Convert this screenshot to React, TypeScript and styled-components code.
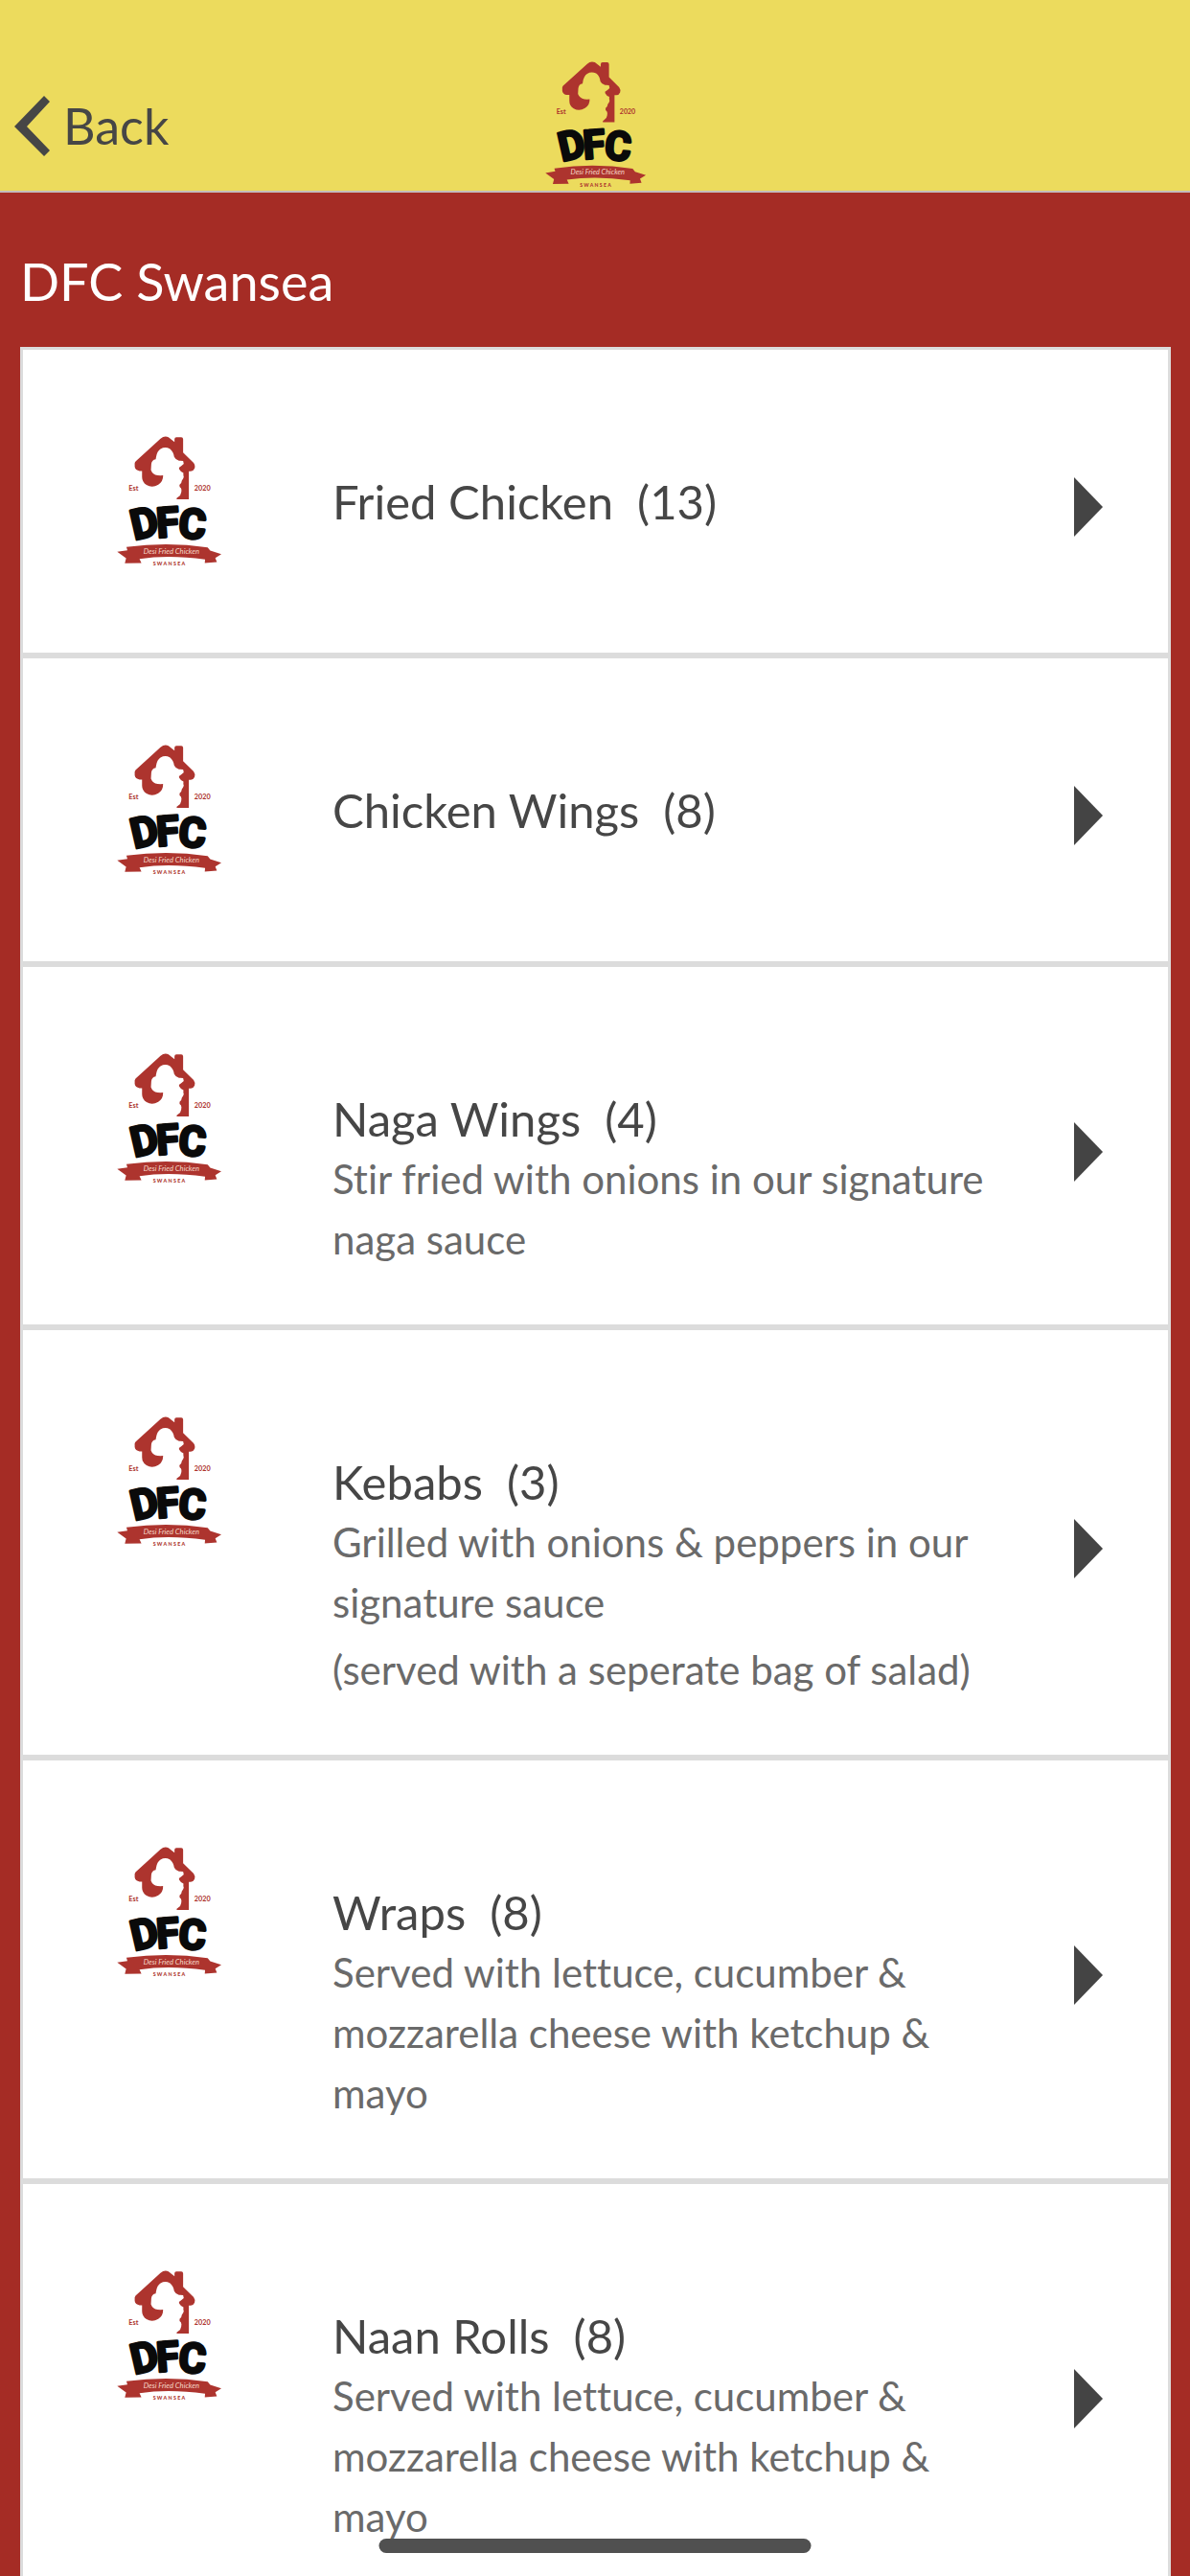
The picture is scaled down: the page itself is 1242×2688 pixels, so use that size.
import React from "react";
import styled, { createGlobalStyle } from "styled-components";

const GlobalStyle = createGlobalStyle`
  *, *::before, *::after { box-sizing: border-box; }
  body {
    margin: 0;
    background: #a52c25;
    font-family: Lato, "Open Sans", sans-serif;
    font-variant-ligatures: none;
    color: #464646;
  }
`;

const Screen = styled.div`
  display: flex;
  flex-direction: column;
  height: 100vh;
  overflow: hidden;
`;

const TopBar = styled.header`
  flex: none;
  display: grid;
  grid-template-columns: 1fr auto 1fr;
  align-items: center;
  padding: 62px 15px 2px;
  background: #ecdb5d;
  border-bottom: 2px solid #c4bcbc;
`;

const BackButton = styled.button`
  justify-self: start;
  display: flex;
  align-items: center;
  gap: 14px;
  padding: 3px 0 0;
  border: 0;
  background: none;
  color: inherit;
  font: inherit;
  font-size: 52px;
  line-height: 66px;
  cursor: pointer;
`;

const Content = styled.main`
  flex: 1;
  min-height: 0;
  padding: 0 20px 0 21px;
  overflow-y: auto;
  scrollbar-width: none;
`;

const PageTitle = styled.h1`
  margin: 0;
  padding: 59px 0 34px;
  color: #fff;
  font-size: 54px;
  font-weight: 400;
  line-height: 68px;
`;

const CategoryList = styled.ul`
  margin: 0;
  padding: 0;
  list-style: none;
`;

const CategoryLink = styled.a`
  display: flex;
  align-items: flex-start;
  min-height: 322px;
  padding: 0 68px 0 96px;
  border: 3px solid #dcdcdc;
  background: #fff;
  color: inherit;
  text-decoration: none;
`;

const Thumb = styled.span`
  flex: none;
  width: 227px;
  padding-top: 88px;
`;

const Details = styled.div`
  flex: 1;
  padding: 126px 60px 57px 0;
`;

const CategoryName = styled.h2`
  margin: 0;
  font-size: 49px;
  font-weight: 400;
  line-height: 64px;
  white-space: pre-wrap;
`;

const Description = styled.p`
  margin: 0;
  color: #6a6a6a;
  font-size: 42px;
  line-height: 63px;

  & + & {
    margin-top: 7px;
  }
`;

const ArrowCell = styled.span`
  flex: none;
  align-self: center;
  padding-top: 12px;
`;

const Drawing = styled.svg`
  display: block;
`;

const HomeIndicator = styled.div`
  position: fixed;
  bottom: 24px;
  left: 50%;
  width: 451px;
  height: 15px;
  border-radius: 8px;
  background: #505050;
  transform: translateX(-50%);
`;

function Logo({ width, height }: { width: number; height: number }) {
  return (
    <Drawing width={width} height={height} viewBox="60 70 340 420" role="img" aria-label="DFC logo">
      <g fill="#ad342e">
        <path d="M122 165 C121 160 124 155 128 152 L203 84 Q215 73 228 79 L247 94 V85 Q247 79 253 79 H268 Q274 79 274 85 V127 L307 160 Q313 168 310 177 Q307 185 298 186 H292 V274 H254 Q252 270 258 267 Q267 262 268 252 Q270 244 267 239 Q261 235 263 228 Q270 222 270 215 Q275 209 276 204 Q274 197 275 191 Q266 188 262 180 L261 175 L269 169 L276 163 L274 154 Q267 152 261 153 Q250 150 246 141 Q244 124 232 115 Q217 108 203 116 Q192 123 189 142 L188 148 Q175 150 174 164 L173 182 Q178 196 194 199 Q203 200 211 199 Q212 218 196 228 Q177 239 159 229 Q145 220 145 204 V185 H137 Q124 183 122 172 Z" />
        <path d="M67 439 L99 434 L96 424 Q224 406 351 425 L359 435 L394 446 L375 458 L380 471 L342 474 L343 463 Q230 447 137 461 L143 474 L91 475 L95 459 Z" />
        <text x="103" y="247" fontSize="22" fontWeight="700" fontFamily="Lato, sans-serif">Est</text>
        <text x="309" y="247" fontSize="22" fontWeight="700" fontFamily="Lato, sans-serif">2020</text>
        <text x="232" y="483" fontSize="16" fontWeight="900" fontFamily="Lato, sans-serif" letterSpacing="4" textAnchor="middle">SWANSEA</text>
      </g>
      <text
        x="121 193 257"
        y="402 394 393"
        rotate="-13 -4 5"
        fill="#0a0a0a"
        stroke="#0a0a0a"
        strokeWidth="9"
        strokeLinejoin="round"
        fontSize="130"
        fontWeight="700"
        fontFamily="Roboto, sans-serif"
      >
        DFC
      </text>
      <text x="237" y="444" fill="#f7d9c9" fontSize="23" fontStyle="italic" fontFamily="Lato, sans-serif" textAnchor="middle">
        Desi Fried Chicken
      </text>
    </Drawing>
  );
}

type Category = { name: string; count: number; lines?: string[] };

const categories: Category[] = [
  { name: "Fried Chicken", count: 13 },
  { name: "Chicken Wings", count: 8 },
  { name: "Naga Wings", count: 4, lines: ["Stir fried with onions in our signature naga sauce"] },
  {
    name: "Kebabs",
    count: 3,
    lines: ["Grilled with onions & peppers in our signature sauce", "(served with a seperate bag of salad)"],
  },
  { name: "Wraps", count: 8, lines: ["Served with lettuce, cucumber & mozzarella cheese with ketchup & mayo"] },
  { name: "Naan Rolls", count: 8, lines: ["Served with lettuce, cucumber & mozzarella cheese with ketchup & mayo"] },
];

function CategoryRow({ name, count, lines = [] }: Category) {
  return (
    <li>
      <CategoryLink href="#">
        <Thumb>
          <Logo width={113} height={140} />
        </Thumb>
        <Details>
          <CategoryName>{`${name}  (${count})`}</CategoryName>
          {lines.map((line) => (
            <Description key={line}>{line}</Description>
          ))}
        </Details>
        <ArrowCell>
          <Drawing width="30" height="62" viewBox="0 0 30 62" aria-hidden="true">
            <path d="M0 0 L30 31 L0 62 Z" fill="#444" />
          </Drawing>
        </ArrowCell>
      </CategoryLink>
    </li>
  );
}

export default function App() {
  return (
    <Screen>
      <GlobalStyle />
      <TopBar>
        <BackButton type="button">
          <Drawing width="37" height="64" viewBox="0 0 37 64" aria-hidden="true">
            <path d="M31 1 L37 7 L13 33 L37 58 L31 64 L0 33 Z" fill="#464646" />
          </Drawing>
          Back
        </BackButton>
        <Logo width={109} height={135} />
      </TopBar>
      <Content>
        <PageTitle>DFC Swansea</PageTitle>
        <CategoryList>
          {categories.map((category) => (
            <CategoryRow key={category.name} {...category} />
          ))}
        </CategoryList>
      </Content>
      <HomeIndicator />
    </Screen>
  );
}
